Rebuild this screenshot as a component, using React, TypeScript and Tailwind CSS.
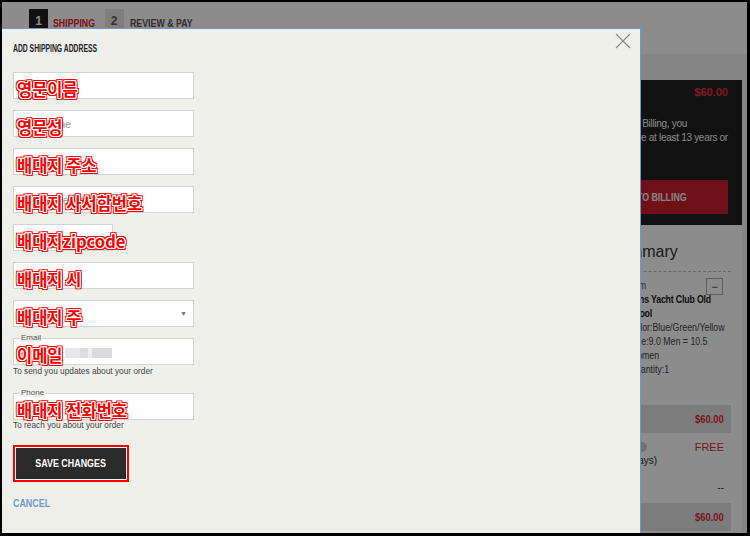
import React from "react";

// Condensed bold look: Arial-metric bold squeezed horizontally
const cond = "font-bold font-['Liberation_Sans',Arial,sans-serif]";
const mark =
  "pointer-events-none absolute left-[3px] top-[8px] z-10 whitespace-nowrap font-['Noto_Sans_CJK_KR','Noto_Sans_CJK_SC',sans-serif] text-[16.5px] font-bold leading-[16px] text-[#ff0000] [text-shadow:1px_0_0_#fff,-1px_0_0_#fff,0_1px_0_#fff,0_-1px_0_#fff,1px_1px_0_#fff,-1px_-1px_0_#fff,1px_-1px_0_#fff,-1px_1px_0_#fff,2px_0_0_#f00,-2px_0_0_#f00,0_2px_0_#f00,0_-2px_0_#f00,2px_2px_0_#f00,-2px_-2px_0_#f00,2px_-2px_0_#f00,-2px_2px_0_#f00]";

interface FieldProps {
  label: string;
  placeholder?: string;
  short?: boolean;
  select?: boolean;
  children?: React.ReactNode;
}

function Field({ label, placeholder, short, select, children }: FieldProps) {
  return (
    <div className={`relative h-[27px] border border-[#d4d4d4] bg-white ${short ? "w-[100px]" : "w-[181px]"}`}>
      <input
        readOnly
        placeholder={placeholder}
        className="h-full w-full bg-transparent px-[4px] text-[11px] text-[#333] outline-none placeholder:text-[#9a9a9a]"
      />
      {select && (
        <span className="absolute right-[6px] top-[8px] text-[7px] text-[#777]">▼</span>
      )}
      {children}
      <span className={mark}>{label}</span>
    </div>
  );
}

function Page() {
  return (
    <div className="flex h-full flex-col">
      {/* checkout steps */}
      <div className="flex h-[52px] shrink-0 items-start bg-white pl-[27px] pt-[7px]">
        <span className="flex h-[24px] w-[19px] items-center justify-center bg-[#1f1f1f] text-[12px] font-bold text-white">1</span>
        <span className={`${cond} ml-[5px] mt-[6px] inline-block origin-left scale-x-[0.8] text-[11px] text-[#e8202e]`}>SHIPPING</span>
        <span className="-ml-[1px] flex h-[24px] w-[19px] items-center justify-center bg-[#e6e6e6] text-[12px] font-bold text-[#5a5a5a]">2</span>
        <span className={`${cond} ml-[6px] mt-[6px] inline-block origin-left scale-x-[0.8] text-[11px] text-[#555]`}>REVIEW &amp; PAY</span>
      </div>

      <div className="flex flex-1 bg-[#f2f2f2]">
        <div className="flex-1" />
        <aside className="mr-[5px] mt-[26px] w-[192px]">
          <div className="bg-[#1f1f1f] px-[14px] pb-[11px] pt-[5px]">
            <p className="text-right text-[11px] font-bold leading-[14px] text-[#ea2a3c]">$60.00</p>
            <div className="mt-[18px] whitespace-nowrap text-[10px] leading-[14px] tracking-[-0.3px] text-[#f4f4f4]">
              <p className="pr-[41px] text-right">By continuing to Billing, you</p>
              <p className="pr-[10px] text-right">confirm that you are at least 13 years or</p>
              <p>older.</p>
            </div>
            <div className="mt-[21px] flex h-[34px] items-center justify-end bg-[#ca1d2b] pr-[41px]">
              <span className={`${cond} inline-block origin-right scale-x-[0.8] whitespace-nowrap text-[11px] text-[#f2f2f2]`}>CONTINUE TO BILLING</span>
            </div>
          </div>

          <div className="bg-white pb-[20px] pl-[14px] pr-[11px] pt-[17px]">
            <p className="text-[16px] leading-[20px] text-[#333]">Order Summary</p>
            <div className="mt-[9px] border-t border-dashed border-[#bdbdbd]" />
            <div className="flex pt-[6px]">
              <div className="mt-[2px] h-[56px] w-[56px] shrink-0 bg-[#eaeaea]" />
              <div className="ml-[9px] mt-[1px] min-w-0 flex-1 origin-left scale-x-[0.88] whitespace-nowrap text-[10px] leading-[14px] text-[#444]">
                <p className="text-[#555]">Item</p>
                <p className="font-bold tracking-[-0.2px] text-[#222]">Vans Yacht Club Old</p>
                <p className="font-bold tracking-[-0.2px] text-[#222]">Skool</p>
                <p>Color:Blue/Green/Yellow</p>
                <p>Size:9.0 Men = 10.5</p>
                <p>Women</p>
                <p>Quantity:1</p>
              </div>
              <div className="mr-[8px] flex h-[17px] w-[17px] shrink-0 items-center justify-center border border-[#aaa] text-[12px] leading-none text-[#555]">
                −
              </div>
            </div>
            <div className="mt-[28px] flex h-[28px] items-center justify-end bg-[#e2e2e2] pr-[7px]">
              <span className={`${cond} inline-block origin-right scale-x-[0.85] text-[11px] text-[#e0283a]`}>$60.00</span>
            </div>
            <div className="flex items-start justify-between whitespace-nowrap pl-[7px] pr-[7px] pt-[7px] text-[10px] leading-[14px] text-[#333]">
              <div>
                <div className="flex w-[76px] items-center justify-between">
                  <span>Standard</span>
                  <span className="h-[10px] w-[10px] rounded-full bg-[#d0d0d0]" />
                </div>
                <p className="-ml-[4px]">(5-7 Business Days)</p>
              </div>
              <span className="text-[11px] text-[#e0283a]">FREE</span>
            </div>
            <p className="mt-[13px] pr-[7px] text-right text-[10px] leading-[14px] text-[#333]">--</p>
            <div className="mt-[8px] flex h-[28px] items-center justify-end bg-[#e2e2e2] pr-[7px]">
              <span className={`${cond} inline-block origin-right scale-x-[0.85] text-[11px] text-[#e0283a]`}>$60.00</span>
            </div>
          </div>
        </aside>
      </div>
    </div>
  );
}

function Modal() {
  return (
    <div className="absolute bottom-0 left-0 top-[26px] z-20 w-[639px] border-r border-t border-[#7395c9] bg-[#f0f0eb] pl-[11px]">
      <button className="absolute right-[9px] top-[4px] h-[16px] w-[16px]" aria-label="close">
        <svg viewBox="0 0 16 16" className="h-[16px] w-[16px]">
          <path d="M1 1 L15 15 M15 1 L1 15" stroke="#8a8a8a" strokeWidth="1.1" fill="none" />
        </svg>
      </button>

      <h2 className={`${cond} mt-[14px] origin-left scale-x-[0.68] whitespace-nowrap text-[10px] leading-[11px] text-[#222]`}>
        ADD SHIPPING ADDRESS
      </h2>

      <div className="mt-[18px] flex flex-col gap-[11px]">
        <Field label="영문이름" placeholder="First Name" />
        <Field label="영문성" placeholder="Last Name" />
        <Field label="배대지 주소" placeholder="Address" />
        <Field label="배대지 사서함번호" placeholder="Apt., Suite, etc." />
        <Field label="배대지zipcode" placeholder="Zip Code" short />
        <Field label="배대지 시" placeholder="City" />
        <Field label="배대지 주" select />
        <Field label="이메일">
          <span className="absolute -top-[6px] left-[6px] bg-[#f0f0eb] px-[1px] text-[8px] leading-[9px] text-[#555]">
            Email
          </span>
          <div className="absolute left-[51px] top-[9px] flex h-[10px]">
            <span className="w-[15px] bg-[#e8e8e8]" />
            <span className="w-[8px] bg-[#dddddd]" />
            <span className="w-[4px] bg-[#eeeeee]" />
            <span className="w-[20px] bg-[#dadada]" />
          </div>
        </Field>
      </div>
      <p className="mt-[1px] text-[8.3px] leading-[10px] text-[#444]">To send you updates about your order</p>

      <div className="mt-[17px]">
        <Field label="배대지 전화번호">
          <span className="absolute -top-[6px] left-[6px] bg-[#f0f0eb] px-[1px] text-[8px] leading-[9px] text-[#555]">
            Phone
          </span>
        </Field>
      </div>
      <p className="text-[8.3px] leading-[10px] text-[#444]">To reach you about your order</p>

      <div className="mt-[15px] h-[37px] w-[116px] border-2 border-[#ff0000] bg-white p-[1px]">
        <button className="flex h-full w-full items-center justify-center bg-[#2b2b2b]">
          <span className={`${cond} inline-block scale-x-[0.81] whitespace-nowrap text-[11px] text-white`}>SAVE CHANGES</span>
        </button>
      </div>

      <p className={`${cond} mt-[15px] origin-left scale-x-[0.81] text-[11px] leading-[12px] text-[#6d9ccc]`}>CANCEL</p>
    </div>
  );
}

export default function App() {
  return (
    <div className="relative h-[536px] w-[750px] overflow-hidden border-b-[3px] border-l-2 border-r-[3px] border-t-2 border-black font-['Liberation_Sans',Arial,sans-serif]">
      <Page />
      <div className="absolute inset-0 z-10 bg-black/45" />
      <Modal />
    </div>
  );
}
